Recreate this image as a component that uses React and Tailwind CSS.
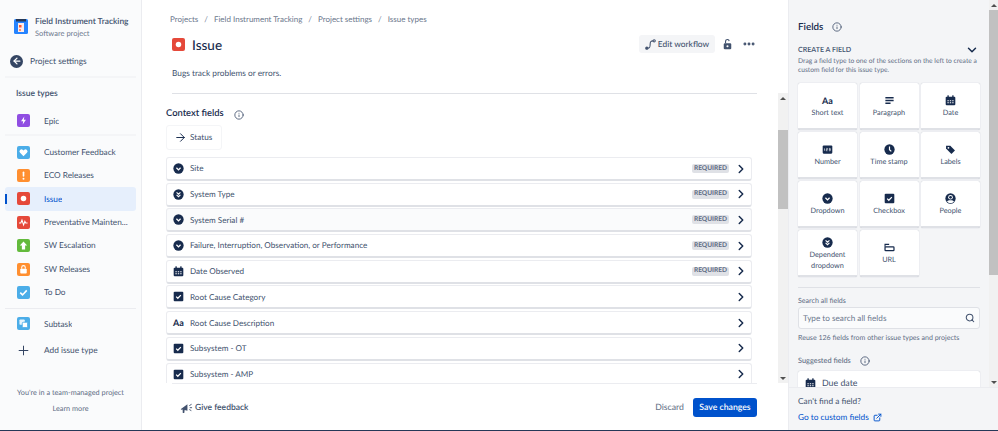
import React from 'react';
import { ChevronRight, ChevronDown, ArrowRight, ArrowLeft, Plus, Search, MoreHorizontal, Info, ExternalLink } from 'lucide-react';

const NAVY = '#172B4D';

// small coloured square used for issue types
const TypeIcon = ({ color, children, size = 'w-[13px] h-[13px]' }) => (
  <span className={`${size} rounded-[2px] flex items-center justify-center shrink-0`} style={{ backgroundColor: color }}>
    <svg viewBox="0 0 16 16" className="w-full h-full" fill="#fff">{children}</svg>
  </span>
);

const glyphs = {
  epic: <path d="M9 3 5 9h2.6L7 13l4-6H8.4z" />,
  heart: <path d="M8 12.5 3.8 8.4a2.5 2.5 0 0 1 3.5-3.6l.7.7.7-.7a2.5 2.5 0 0 1 3.5 3.6z" />,
  bang: <><rect x="7" y="3" width="2" height="6.5" rx="1" /><circle cx="8" cy="12" r="1.2" /></>,
  dot: <circle cx="8" cy="8" r="3.4" />,
  pulse: <path d="M2.5 8.5h2.2l1.4-3.5 2 6 1.6-4.5 1 2h2.3" fill="none" stroke="#fff" strokeWidth="1.3" />,
  up: <path d="M8 3 3.5 8H6v5h4V8h2.5z" />,
  lock: <><rect x="4" y="7" width="8" height="6" rx="1" /><path d="M5.8 7V5.4a2.2 2.2 0 0 1 4.4 0V7" fill="none" stroke="#fff" strokeWidth="1.3" /></>,
  check: <path d="m4 8.2 2.8 2.8L12 5.4" fill="none" stroke="#fff" strokeWidth="2" />,
  subtask: <><rect x="3" y="3" width="6.5" height="6.5" rx="1" fill="#fff" opacity=".85" /><rect x="6.5" y="6.5" width="6.5" height="6.5" rx="1" fill="#fff" stroke="#4BADE8" /></>,
};

const SideItem = ({ color, glyph, label, active }) => (
  <div className={`relative h-[23.4px] mx-[5px] flex items-center pl-[12px] rounded-[3px] ${active ? 'bg-[#E6EFFC] text-[#0052CC]' : 'text-[#42526E]'}`}>
    {active && <span className="absolute left-0 top-[7px] h-[10px] w-[2px] bg-[#0052CC]" />}
    <TypeIcon color={color}>{glyphs[glyph]}</TypeIcon>
    <span className="ml-[14px] truncate text-[8.25px]">{label}</span>
  </div>
);

// field type glyphs, drawn in navy
const FieldIcon = ({ type, className = 'w-[11px] h-[11px]' }) => {
  if (type === 'text') {
    return <span className="text-[9px] leading-[11px] font-bold text-[#172B4D] w-[11px] text-center whitespace-nowrap">Aa</span>;
  }
  return (
    <svg viewBox="0 0 16 16" className={`${className} shrink-0`}>
      {type === 'dropdown' && <><circle cx="8" cy="8" r="7.5" fill={NAVY} /><path d="m5 7 3 3 3-3" fill="none" stroke="#fff" strokeWidth="1.8" /></>}
      {type === 'dependent' && <><circle cx="8" cy="8" r="7.5" fill={NAVY} /><path d="m5.2 5 2.8 2.6L10.8 5M5.2 8.6 8 11.2l2.8-2.6" fill="none" stroke="#fff" strokeWidth="1.6" /></>}
      {type === 'date' && <><rect x="1" y="2.5" width="14" height="12.5" rx="1.5" fill={NAVY} /><rect x="3.5" y="0.5" width="2" height="3.5" fill={NAVY} /><rect x="10.5" y="0.5" width="2" height="3.5" fill={NAVY} /><path d="M3.5 7.5h2v1.6h-2zM7 7.5h2v1.6H7zM10.5 7.5h2v1.6h-2zM3.5 10.5h2v1.6h-2zM7 10.5h2v1.6H7zM10.5 10.5h2v1.6h-2z" fill="#fff" /></>}
      {type === 'checkbox' && <><rect x="1" y="1" width="14" height="14" rx="1.5" fill={NAVY} /><path d="m4.6 8.2 2.4 2.4 4.4-4.6" fill="none" stroke="#fff" strokeWidth="1.8" /></>}
      {type === 'paragraph' && <path d="M2 3h12v2.2H2zM2 7h12v2.2H2zM2 11h7.5v2.2H2z" fill={NAVY} />}
      {type === 'number' && <><rect x="1" y="2" width="14" height="12" rx="1.5" fill={NAVY} /><path d="M3.6 6.4v3.4M6.2 6.4h1.7v1.6H6.2v1.8h1.8M10 6.4h2v3.4h-2M10 8h2" fill="none" stroke="#fff" strokeWidth=".9" /></>}
      {type === 'time' && <><circle cx="8" cy="8" r="7.5" fill={NAVY} /><path d="M8 3.8v4.4l2.6 2.6" fill="none" stroke="#fff" strokeWidth="1.7" /></>}
      {type === 'labels' && <><path d="M1.5 2.5h6.2l6.8 6.8-5.2 5.2-7.8-7.8z" fill={NAVY} /><circle cx="5" cy="5.6" r="1.3" fill="#fff" /></>}
      {type === 'people' && <><circle cx="8" cy="8" r="7.5" fill={NAVY} /><circle cx="8" cy="6.2" r="3.4" fill="#fff" /><circle cx="8" cy="6.2" r="2" fill={NAVY} /><path d="M3 12.6c1-2.6 9-2.6 10 0-2 2.4-8 2.4-10 0" fill="#fff" /></>}
      {type === 'url' && <><path d="M1.5 7V3.4h6" fill="none" stroke={NAVY} strokeWidth="1.6" /><rect x="1.5" y="7" width="13" height="5.5" rx="1" fill="none" stroke={NAVY} strokeWidth="1.8" /></>}
    </svg>
  );
};

const InfoDot = ({ className = '' }) => <Info className={`w-[10px] h-[10px] text-[#42526E] ${className}`} strokeWidth={2} />;

const FieldRow = ({ type, label, required, shaded }) => (
  <div className={`h-[24px] mb-[1.7px] shrink-0 flex items-center pl-[6px] pr-[3px] rounded-[3px] border border-[#EBECF0] border-b-2 border-b-[#DFE1E6] ${shaded ? 'bg-[#FAFBFC]' : 'bg-white'}`}>
    <FieldIcon type={type} />
    <span className="ml-[6px] text-[8.15px] text-[#42526E] flex-1">{label}</span>
    {required && <span className="mr-[5px] h-[9px] w-[37px] flex items-center justify-center rounded-[2px] bg-[#DFE1E6] text-[6.6px] font-bold text-[#5E6C84]">REQUIRED</span>}
    <ChevronRight className="w-[14px] h-[14px] text-[#172B4D]" strokeWidth={2.5} />
  </div>
);

const Tile = ({ type, label }) => (
  <div className="h-[47px] pt-[3px] bg-white rounded-[2px] border-b-2 border-b-[#DFE1E6] shadow-[0_0_1px_rgba(9,30,66,0.3)] flex flex-col items-center justify-center gap-[2px] text-center">
    <FieldIcon type={type} />
    <span className="text-[7.3px] leading-[10.5px] text-[#42526E]">{label}</span>
  </div>
);

const Arrow = ({ up }) => (
  <div className="h-[10px] flex items-center justify-center shrink-0">
    <span className={`w-0 h-0 border-x-[3px] border-x-transparent ${up ? 'border-b-[3px] border-b-[#505050]' : 'border-t-[3px] border-t-[#505050]'}`} />
  </div>
);

const rows = [
  { type: 'dropdown', label: 'Site', required: true },
  { type: 'dependent', label: 'System Type', required: true },
  { type: 'dropdown', label: 'System Serial #', required: true, shaded: true },
  { type: 'dropdown', label: 'Failure, Interruption, Observation, or Performance', required: true },
  { type: 'date', label: 'Date Observed', required: true },
  { type: 'checkbox', label: 'Root Cause Category' },
  { type: 'text', label: 'Root Cause Description' },
  { type: 'checkbox', label: 'Subsystem - OT' },
  { type: 'checkbox', label: 'Subsystem - AMP' },
];

const tiles = [
  { type: 'text', label: 'Short text' },
  { type: 'paragraph', label: 'Paragraph' },
  { type: 'date', label: 'Date' },
  { type: 'number', label: 'Number' },
  { type: 'time', label: 'Time stamp' },
  { type: 'labels', label: 'Labels' },
  { type: 'dropdown', label: 'Dropdown' },
  { type: 'checkbox', label: 'Checkbox' },
  { type: 'people', label: 'People' },
  { type: 'dependent', label: <>Dependent<br />dropdown</> },
  { type: 'url', label: 'URL' },
];

const Crumbs = () => (
  <div className="flex items-center h-[14px] text-[8px] text-[#6B778C] gap-[6px] pl-[28px]">
    <span>Projects</span><span>/</span>
    <span>Field Instrument Tracking</span><span>/</span>
    <span>Project settings</span><span>/</span>
    <span>Issue types</span>
  </div>
);

export default function App() {
  return (
    <div className="w-[998px] h-[431px] flex flex-col overflow-hidden bg-white font-['Lato',sans-serif] [text-rendering:geometricPrecision]">
      <div className="flex-1 flex min-h-0">
        {/* left nav */}
        <aside className="w-[142px] shrink-0 bg-[#FAFBFC] border-r border-[#EBECF0] flex flex-col">
          <div className="flex items-start pl-[14px] pt-[16px] h-[54px] shrink-0">
            <svg viewBox="0 0 14 15" className="w-[14px] h-[15px] mt-[3px] shrink-0">
              <rect width="14" height="15" rx="1.5" fill="#2684FF" />
              <rect x="2" y="0" width="10" height="2.5" fill="#253858" />
              <rect x="4" y="4" width="6" height="9" fill="#FFEBE6" />
              <rect x="5" y="6" width="2.5" height="2.5" fill="#FF5630" />
              <rect x="5" y="10" width="2" height="2" fill="#FF8F73" />
            </svg>
            <div className="ml-[7px] -mt-[1px]">
              <div className="text-[8.4px] leading-[13px] font-semibold text-[#42526E] whitespace-nowrap">Field Instrument Tracking</div>
              <div className="text-[7.5px] leading-[12px] text-[#6B778C]">Software project</div>
            </div>
          </div>
          <div className="flex items-center pl-[10px] h-[14px] shrink-0">
            <span className="w-[13px] h-[13px] rounded-full bg-[#344563] flex items-center justify-center">
              <ArrowLeft className="w-[10px] h-[10px] text-white" strokeWidth={3} />
            </span>
            <span className="ml-[7px] text-[8.4px] text-[#42526E]">Project settings</span>
          </div>
          <div className="mx-[5px] h-[2px] bg-[#F4F5F7] mt-[8px] shrink-0" />
          <div className="pl-[16px] mt-[8px] h-[14px] text-[8.5px] font-semibold text-[#42526E] flex items-center shrink-0">Issue types</div>
          <div className="mt-[9px]">
            <SideItem color="#904EE2" glyph="epic" label="Epic" />
          </div>
          <div className="mx-[5px] h-[2px] bg-[#F4F5F7] mt-[2px] mb-[3px] shrink-0" />
          <div className="mt-[1px]">
            <SideItem color="#4BADE8" glyph="heart" label="Customer Feedback" />
            <SideItem color="#FF8F30" glyph="bang" label="ECO Releases" />
            <SideItem color="#E5493A" glyph="dot" label="Issue" active />
            <SideItem color="#E5493A" glyph="pulse" label="Preventative Mainten..." />
            <SideItem color="#63BA3C" glyph="up" label="SW Escalation" />
            <SideItem color="#FF8F30" glyph="lock" label="SW Releases" />
            <SideItem color="#4BADE8" glyph="check" label="To Do" />
          </div>
          <div className="mx-[5px] h-[1px] bg-[#EBECF0] mt-[4px] mb-[3px] shrink-0" />
          <SideItem color="#4BADE8" glyph="subtask" label="Subtask" />
          <div className="h-[24px] mt-[3px] mx-[5px] flex items-center pl-[11px] text-[#42526E] shrink-0">
            <Plus className="w-[15px] h-[15px] text-[#344563]" strokeWidth={1.6} />
            <span className="ml-[13px] text-[8.3px]">Add issue type</span>
          </div>
          <div className="mt-auto pb-[15px] text-center text-[7.3px] text-[#5E6C84]">
            <div className="leading-[12px]">You're in a team-managed project</div>
            <div className="leading-[12px] mt-[4px]">Learn more</div>
          </div>
        </aside>

        {/* main column */}
        <main className="w-[646px] shrink-0 flex flex-col">
          <div className="h-[93px] shrink-0 pt-[12px] pr-[32px]">
            <Crumbs />
            <div className="flex items-center pl-[30px] mt-[9px] h-[18px]">
              <TypeIcon color="#E5493A">{glyphs.dot}</TypeIcon>
              <span className="ml-[7px] text-[13.5px] font-medium text-[#172B4D] translate-y-[1px]">Issue</span>
              <div className="ml-auto flex items-center">
                <div className="h-[18px] w-[76px] bg-[#F4F5F7] rounded-[3px] flex items-center justify-center gap-[2px] text-[8.4px] text-[#42526E] font-medium whitespace-nowrap">
                  <svg viewBox="0 0 12 12" className="w-[11px] h-[11px]" fill="none" stroke="#42526E" strokeWidth="1.2">
                    <circle cx="2" cy="10" r="1.2" fill="#42526E" />
                    <circle cx="10" cy="2" r="1.2" />
                    <path d="M3 10c2.4 0 2.6-1 2.6-4S6 2 8.8 2" />
                  </svg>
                  Edit workflow
                </div>
                <svg viewBox="0 0 12 14" className="w-[9px] h-[12px] ml-[8px]" fill="#42526E">
                  <rect x="1" y="6" width="10" height="8" rx="1.5" />
                  <path d="M3.4 6V3.6a2.4 2.4 0 0 1 4.8-.4" fill="none" stroke="#42526E" strokeWidth="1.5" />
                  <circle cx="6" cy="10" r="1.4" fill="#fff" />
                </svg>
                <MoreHorizontal className="w-[14px] h-[14px] ml-[10px] text-[#42526E]" strokeWidth={3} />
              </div>
            </div>
            <div className="pl-[30px] mt-[14px] text-[8.3px] leading-[13px] text-[#42526E]">Bugs track problems or errors.</div>
          </div>

          <div className="flex-1 min-h-0 flex">
            <div className="w-[636px] flex flex-col">
              <div className="h-[290px] overflow-hidden pl-[24px] pr-[21px] flex flex-col">
                <div className="ml-[6px] h-[1px] bg-[#DFE1E6] shrink-0" />
                <div className="mt-[14px] h-[13px] flex items-center shrink-0">
                  <span className="text-[9.4px] font-semibold text-[#172B4D]">Context fields</span>
                  <InfoDot className="ml-[10px]" />
                </div>
                <div className="mt-[4px] w-[56px] h-[25px] shrink-0 flex items-center pl-[7px] rounded-[3px] border border-[#F4F5F7] bg-white">
                  <ArrowRight className="w-[13px] h-[13px] text-[#172B4D]" strokeWidth={1.8} />
                  <span className="ml-[3px] text-[8.2px] text-[#42526E]">Status</span>
                </div>
                <div className="mt-[7px] mr-[5px] flex flex-col">
                  {rows.map((r, i) => <FieldRow key={i} {...r} />)}
                </div>
              </div>
              <div className="flex-1 border-t border-[#EBECF0] ml-[30px] mr-[21px] flex items-center">
                <div className="flex items-center ml-[8px] text-[8.5px] font-semibold text-[#42526E]">
                  <svg viewBox="0 0 14 14" className="w-[13px] h-[13px] mr-[2px]" fill="#42526E">
                    <path d="M1 8.5 8 3.5v7L5 9.6 4.6 13H3l-.2-3.8L1 9.5z" />
                    <path d="M10 5l2.5-1.5M10.5 7.2H13M10 9.2l2.2 1.2" stroke="#42526E" fill="none" />
                  </svg>
                  Give feedback
                </div>
                <span className="ml-auto text-[8.7px] font-medium text-[#6B778C]">Discard</span>
                <div className="ml-[9px] w-[64px] h-[19px] bg-[#0052CC] rounded-[3px] flex items-center justify-center text-[8.7px] font-semibold text-white">Save changes</div>
              </div>
            </div>
            {/* main scrollbar */}
            <div className="w-[10px] h-[290px] bg-[#F1F1F1] flex flex-col shrink-0">
              <Arrow up />
              <div className="h-[27px] shrink-0" />
              <div className="h-[79px] bg-[#C1C1C1] shrink-0" />
              <div className="flex-1" />
              <Arrow />
            </div>
          </div>
        </main>

        {/* fields panel */}
        <aside className="flex-1 min-w-0 bg-[#F4F5F7] flex flex-col border-l border-[#EBECF0]">
          <div className="h-[387px] shrink-0 flex">
            <div className="w-[200px] overflow-hidden pl-[9px] pr-[9px] pt-[20px]">
              <div className="flex items-center h-[14px]">
                <span className="text-[9.8px] font-semibold text-[#172B4D]">Fields</span>
                <InfoDot className="ml-[9px]" />
              </div>
              <div className="flex items-center justify-between mt-[10px] h-[12px] pr-[1px]">
                <span className="text-[7.1px] font-semibold text-[#42526E]">CREATE A FIELD</span>
                <ChevronDown className="w-[14px] h-[14px] text-[#172B4D]" strokeWidth={2.5} />
              </div>
              <p className="mt-[1px] text-[6.7px] leading-[9px] text-[#5E6C84]">Drag a field type to one of the sections on the left to create a custom field for this issue type.</p>
              <div className="mt-[8px] grid grid-cols-3 gap-x-[2.5px] gap-y-[2px]">
                {tiles.map((t, i) => <Tile key={i} {...t} />)}
              </div>
              <div className="mt-[10px] h-[1px] bg-[#DFE1E6]" />
              <div className="mt-[8px] text-[7.1px] leading-[10px] text-[#5E6C84]">Search all fields</div>
              <div className="mt-[1px] h-[22px] bg-[#FAFBFC] border border-[#DFE1E6] rounded-[3px] flex items-center justify-between px-[4px]">
                <span className="text-[8.2px] text-[#6B778C]">Type to search all fields</span>
                <Search className="w-[10px] h-[10px] text-[#42526E]" strokeWidth={2.5} />
              </div>
              <div className="mt-[3px] text-[7.05px] leading-[11px] text-[#5E6C84] whitespace-nowrap">Reuse 126 fields from other issue types and projects</div>
              <div className="mt-[12px] flex items-center h-[12px]">
                <span className="text-[7.4px] font-medium text-[#5E6C84]">Suggested fields</span>
                <InfoDot className="ml-[9px]" />
              </div>
              <div className="mt-[4px] h-[24px] bg-white rounded-[2px] shadow-[0_0_1px_rgba(9,30,66,0.3)] flex items-center pl-[7px]">
                <FieldIcon type="date" />
                <span className="ml-[6px] text-[8.8px] text-[#42526E]">Due date</span>
              </div>
            </div>
            <div className="w-[9px] ml-auto bg-[#F1F1F1] flex flex-col">
              <Arrow up />
              <div className="h-[265px] bg-[#C1C1C1] shrink-0" />
              <div className="flex-1" />
              <Arrow />
            </div>
          </div>
          <div className="flex-1 pl-[9px] pt-[7px] border-t border-[#EBECF0] text-[8.3px] text-[#42526E]">
            <div className="leading-[13px]">Can't find a field?</div>
            <div className="mt-[3px] leading-[13px] text-[#0052CC] flex items-center">
              Go to custom fields
              <ExternalLink className="w-[9px] h-[9px] ml-[4px]" strokeWidth={2.5} />
            </div>
          </div>
        </aside>
      </div>
      <div className="h-[1px] bg-[#253858] shrink-0" />
    </div>
  );
}
